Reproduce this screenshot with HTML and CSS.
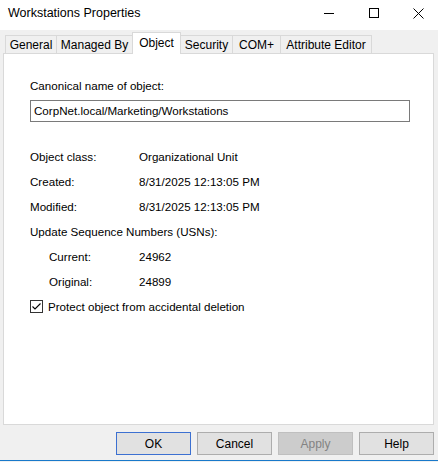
FILE: index.html
```html
<!DOCTYPE html>
<html>
<head>
<meta charset="utf-8">
<link rel="stylesheet" href="styles.css">
</head>
<body>
<div class="window">
  <div class="titlebar">
    <span class="title">Workstations Properties</span>
    <div class="controls">
      <span class="ctl"><svg width="10" height="10" viewBox="0 0 10 10"><path d="M0 5.5H10" stroke="#000" stroke-width="1"/></svg></span>
      <span class="ctl"><svg width="10" height="10" viewBox="0 0 10 10"><rect x="0.5" y="0.5" width="9" height="9" fill="none" stroke="#000" stroke-width="1"/></svg></span>
      <span class="ctl"><svg width="11" height="11" viewBox="0 0 11 11"><path d="M0.5 0.5L10.5 10.5M10.5 0.5L0.5 10.5" stroke="#000" stroke-width="1"/></svg></span>
    </div>
  </div>
  <div class="client">
    <div class="tabs">
      <div class="tab t-general">General</div>
      <div class="tab t-managed">Managed By</div>
      <div class="tab t-object active">Object</div>
      <div class="tab t-security">Security</div>
      <div class="tab t-com">COM+</div>
      <div class="tab t-attr">Attribute Editor</div>
    </div>
    <div class="panel">
      <div class="label-top">Canonical name of object:</div>
      <div class="textbox">CorpNet.local/Marketing/Workstations</div>
      <div class="rows">
        <div class="row"><span class="key">Object class:</span><span class="val">Organizational Unit</span></div>
        <div class="row"><span class="key">Created:</span><span class="val">8/31/2025 12:13:05 PM</span></div>
        <div class="row"><span class="key">Modified:</span><span class="val">8/31/2025 12:13:05 PM</span></div>
        <div class="row"><span class="key">Update Sequence Numbers (USNs):</span></div>
        <div class="row sub"><span class="key">Current:</span><span class="val">24962</span></div>
        <div class="row sub"><span class="key">Original:</span><span class="val">24899</span></div>
        <div class="row check">
          <span class="box"><svg width="11" height="11" viewBox="0 0 11 11"><path d="M1.5 5.5L4 8L9.5 2.5" fill="none" stroke="#000" stroke-width="1.1"/></svg></span>
          <span>Protect object from accidental deletion</span>
        </div>
      </div>
    </div>
    <div class="buttons">
      <div class="btn default">OK</div>
      <div class="btn">Cancel</div>
      <div class="btn disabled">Apply</div>
      <div class="btn">Help</div>
    </div>
  </div>
  <div class="taskbar-edge"></div>
</div>
</body>
</html>
```
FILE: styles.css
```css
* { box-sizing: border-box; }
html, body {
  margin: 0;
  padding: 0;
  width: 438px;
  height: 462px;
  overflow: hidden;
  background: #f0f0f0;
}
body {
  font-family: "Liberation Sans", Arial, sans-serif;
  font-size: 11.6px;
  color: #000;
}
.window {
  display: flex;
  flex-direction: column;
  height: 462px;
}
.titlebar {
  height: 30px;
  background: #fff;
  display: flex;
  align-items: center;
  justify-content: space-between;
  padding-left: 8px;
}
.title {
  font-size: 12.5px;
  margin-top: -4px;
}
.controls {
  display: flex;
  height: 100%;
  margin-top: -4px;
  margin-right: -3px;
}
.ctl {
  width: 45px;
  display: flex;
  align-items: center;
  justify-content: center;
}
.client {
  padding: 3px 4px 0 3px;
  flex: 1;
  display: flex;
  flex-direction: column;
}
.tabs {
  display: flex;
  align-items: flex-end;
  height: 20px;
  padding-left: 2px;
  position: relative;
  z-index: 1;
  font-size: 12px;
}
.tab {
  height: 18px;
  border: 1px solid #d9d9d9;
  border-bottom: none;
  border-left: none;
  background: #f0f0f0;
  display: flex;
  align-items: center;
  justify-content: center;
  line-height: 1;
  padding-top: 1px;
}
.tab:first-child { border-left: 1px solid #d9d9d9; }
.tab.active {
  height: 22px;
  background: #fff;
  margin-bottom: -1px;
  border-left: 1px solid #d9d9d9;
  margin-left: -1px;
  padding-top: 0;
  padding-bottom: 2px;
}
.t-general { width: 52px; }
.t-managed { width: 76px; }
.t-object { width: 49px; }
.t-security { width: 52px; }
.t-com { width: 48px; }
.t-attr { width: 91px; }
.panel {
  height: 372px;
  background: #fff;
  border: 1px solid #d9d9d9;
  padding: 24px 0 0 26px;
}
.label-top {
  height: 16px;
  line-height: 16px;
}
.textbox {
  margin-top: 6px;
  width: 380px;
  height: 22px;
  border: 1px solid #7a7a7a;
  padding-left: 3px;
  line-height: 20px;
}
.rows {
  margin-top: 22px;
}
.row {
  height: 25px;
  display: flex;
  align-items: center;
}
.key {
  width: 109px;
  white-space: nowrap;
}
.row.sub .key {
  width: 90px;
  margin-left: 19px;
}
.row.check {
  gap: 5px;
}
.box {
  width: 13px;
  height: 13px;
  border: 1px solid #333;
  display: flex;
  align-items: center;
  justify-content: center;
}
.buttons {
  display: flex;
  justify-content: flex-end;
  gap: 6px;
  margin-top: 7px;
  font-size: 12px;
}
.btn {
  width: 75px;
  height: 23px;
  background: #e1e1e1;
  border: 1px solid #adadad;
  display: flex;
  align-items: center;
  justify-content: center;
}
.btn.default {
  border-color: #3c70d1;
}
.btn.disabled {
  background: #cccccc;
  border-color: #bfbfbf;
  color: #838383;
}
.taskbar-edge {
  height: 1px;
  background: #1979ca;
  margin-top: auto;
  margin-bottom: 1px;
}
```
